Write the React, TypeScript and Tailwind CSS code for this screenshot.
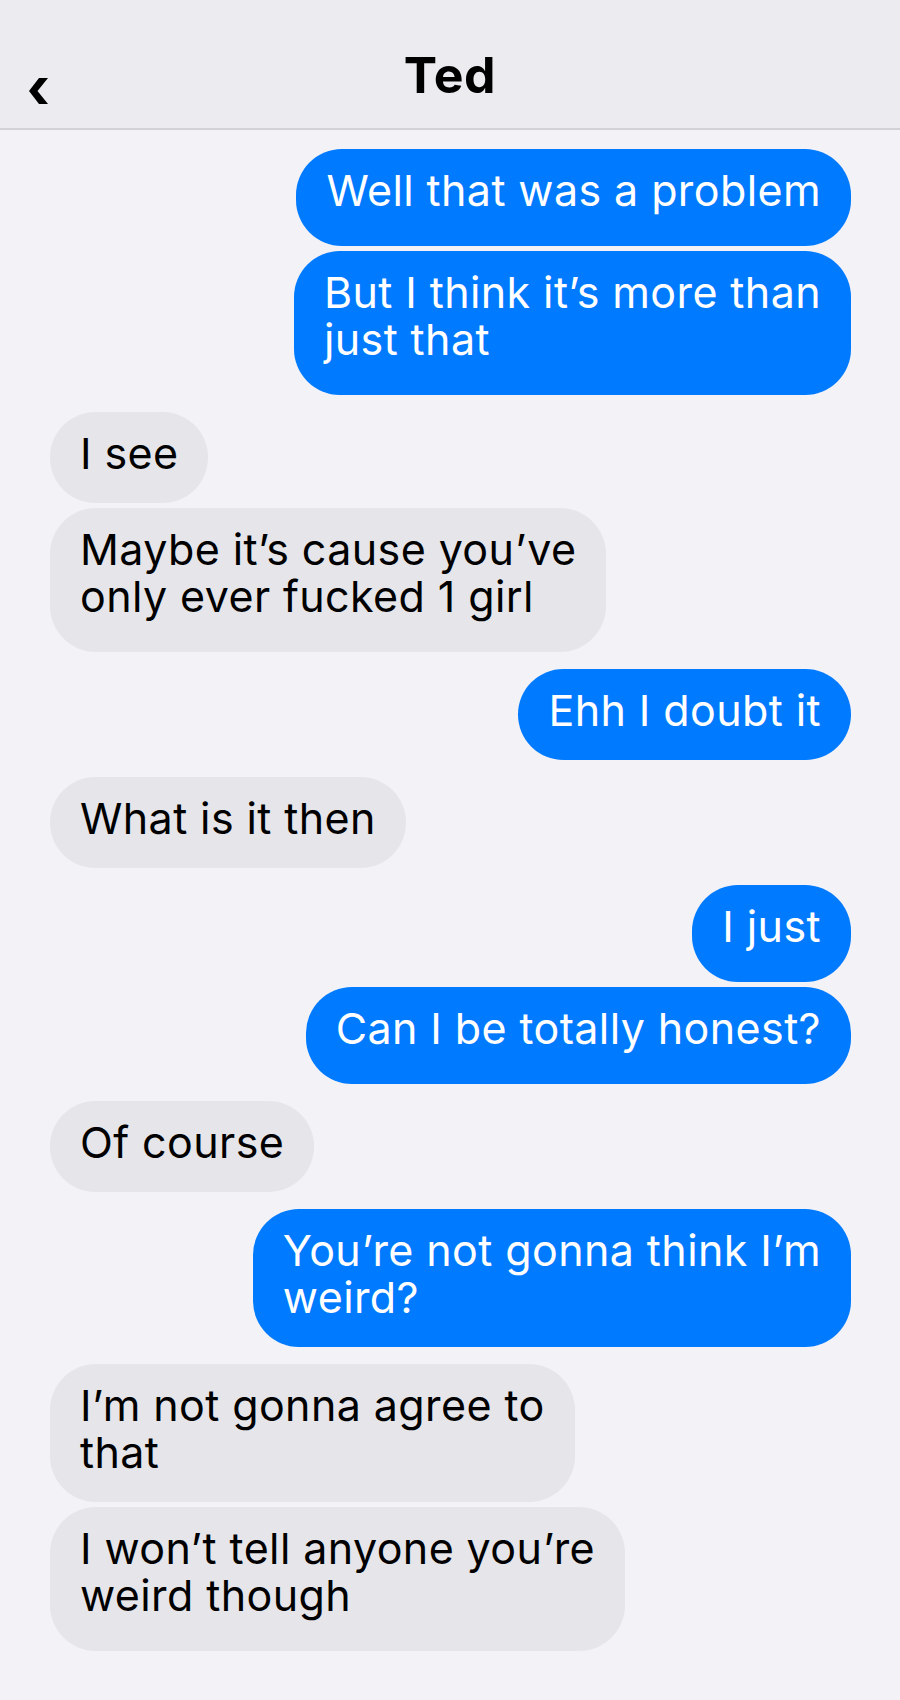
import React from "react";

type Msg = {
  me: boolean;
  lines: string[];
  tail?: boolean; // last line has a descender, bubble sits a bit taller
  first?: boolean; // starts a new group
};

const messages: Msg[] = [
  { me: true, lines: ["Well that was a problem"], tail: true, first: true },
  { me: true, lines: ["But I think it’s more than", "just that"], tail: true },
  { me: false, lines: ["I see"], first: true },
  { me: false, lines: ["Maybe it’s cause you’ve", "only ever fucked 1 girl"], tail: true },
  { me: true, lines: ["Ehh I doubt it"], first: true },
  { me: false, lines: ["What is it then"], first: true },
  { me: true, lines: ["I just"], tail: true, first: true },
  { me: true, lines: ["Can I be totally honest?"], tail: true },
  { me: false, lines: ["Of course"], first: true },
  { me: true, lines: ["You’re not gonna think I’m", "weird?"], first: true },
  { me: false, lines: ["I’m not gonna agree to", "that"], first: true },
  { me: false, lines: ["I won’t tell anyone you’re", "weird though"], tail: true },
];

const Bubble = ({ msg, index }: { msg: Msg; index: number }) => {
  const gap = index === 0 ? "mt-0" : msg.first ? "mt-[17px]" : "mt-[5px]";
  return (
    <div className={`flex ${msg.me ? "justify-end" : "justify-start"} ${gap}`}>
      <div
        className={`rounded-[46px] px-[30px] pt-[18px] text-[43px] leading-[47px] tracking-[0.4px] whitespace-nowrap ${
          msg.tail ? "pb-[32px]" : "pb-[26px]"
        } ${msg.me ? "bg-[#007aff] text-white" : "bg-[#e5e5ea] text-black"}`}
      >
        {msg.lines.map((line, i) => (
          <div key={i}>{line}</div>
        ))}
      </div>
    </div>
  );
};

const App = () => {
  return (
    <div className="min-h-[1700px] bg-[#f2f2f7] font-['Inter','Liberation_Sans',sans-serif]">
      <header className="grid h-[130px] grid-cols-[1fr_auto_1fr] items-start border-b-2 border-[#d1d1d6] bg-[#ebebf0]">
        <div className="pl-[29px] pt-[78px]">
          <svg width="19" height="26" viewBox="0 0 19 26" fill="black">
            <polygon points="10,0 19,0 8.5,13 19,26 10,26 0,13" />
          </svg>
        </div>
        <h1 className="pt-[50px] text-[50px] leading-[50px] font-bold tracking-[0.5px] text-black">Ted</h1>
        <div />
      </header>
      <main className="flex flex-col pl-[50px] pr-[49px] pt-[19px] pb-10">
        {messages.map((m, i) => (
          <Bubble key={i} msg={m} index={i} />
        ))}
      </main>
    </div>
  );
};

export default App;
